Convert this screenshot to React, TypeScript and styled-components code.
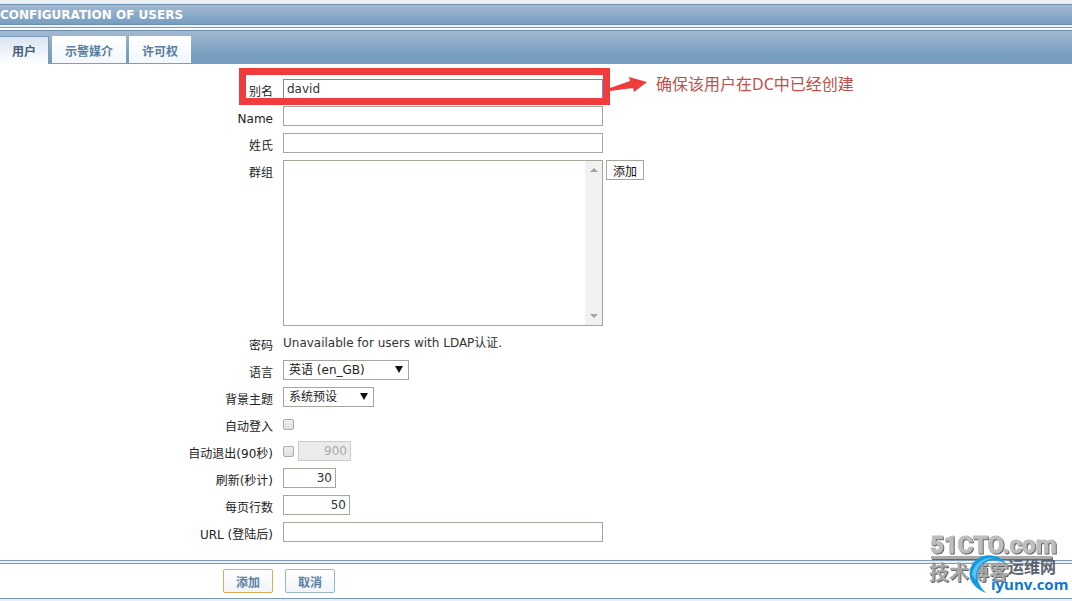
import React from 'react';
import styled, { createGlobalStyle } from 'styled-components';

const Global = createGlobalStyle`
  * { box-sizing: border-box; }
  body { margin: 0; background: #fff; color: #333; }
  body, input, button, select { font-family: "DejaVu Sans", "Noto Sans CJK SC", sans-serif; font-size: 12px; }
`;

const Page = styled.main`
  position: relative;
  border-top: 4px solid #e9eff4;
  border-bottom: 2px solid #e6f0f8;
  overflow: hidden;
`;
const Title = styled.h1`
  margin: 0;
  height: 21px;
  border-top: 1px solid #6f90ad;
  border-bottom: 1px solid #6f90ad;
  background: linear-gradient(#a2b9d2, #769dc0);
  color: #fff;
  font: bold 12px/20px "DejaVu Sans", sans-serif;
`;
const Gap = styled.div`
  height: 5px;
  border-top: 2px solid #eaf3fa;
  background: linear-gradient(#7f9bb3 1px, #fff 1px);
`;
const Tabs = styled.nav`
  display: flex;
  gap: 3px;
  height: 34px;
  padding-top: 5px;
  border-top: 1px solid #6f90ad;
  border-bottom: 1px solid #7b9fc0;
  background: linear-gradient(#a2b9d2, #769dc0 75%);
`;
const Tab = styled.button<{ $active?: boolean }>`
  height: ${p => (p.$active ? 28 : 27)}px;
  padding: 0 12px;
  border: 1px solid ${p => (p.$active ? '#7d9cbb' : '#fff')};
  border-width: 1px 1px 0 ${p => (p.$active ? 0 : 1)}px;
  background: ${p => (p.$active ? 'linear-gradient(#d9e5f1, #fff)' : 'linear-gradient(#fff, #f1f7fc)')};
  color: ${p => (p.$active ? '#44607c' : '#5a7fa3')};
  font-weight: bold;
`;
const Rows = styled.div`
  display: grid;
  gap: 7px;
  padding: 15px 0 18px;
`;
const Row = styled.div`
  display: grid;
  grid-template-columns: 273px 1fr;
  column-gap: 10px;
  align-items: start;
`;
const Label = styled.label`
  padding-top: 3px;
  height: 20px;
  color: #222;
  line-height: 20px;
  text-align: right;
`;
const Cell = styled.div`
  display: flex;
  align-items: flex-start;
  gap: 3px;
`;
const Input = styled.input<{ $w?: number; $focus?: boolean }>`
  width: ${p => p.$w ?? 320}px;
  height: 20px;
  padding: 0 3px;
  border: 1px solid ${p => (p.$focus ? '#6a8bd0' : '#a6a69c')};
  background: #fff;
  color: #333;
  outline: none;
  text-align: ${p => (p.$w ? 'right' : 'left')};
  &:disabled { background: #ebebeb; border-color: #ccc; color: #aaa; }
`;
const ListBox = styled.div`
  display: flex;
  justify-content: flex-end;
  width: 320px;
  height: 166px;
  border: 1px solid #a6a69c;
`;
const Track = styled.div`
  display: flex;
  flex-direction: column;
  justify-content: space-between;
  align-items: center;
  width: 17px;
  padding: 7px 0;
  background: #f1f1f1;
`;
const Arrow = styled.span<{ $down?: boolean }>`
  border: 4px solid transparent;
  border-width: ${p => (p.$down ? '4px 4px 0' : '0 4px 4px')};
  border-${p => (p.$down ? 'top' : 'bottom')}-color: #a3a3a3;
`;
const SmallButton = styled.button`
  width: 38px;
  height: 20px;
  padding: 0;
  border: 1px solid #a6a69c;
  background: #fff;
  color: #111;
`;
const SelectWrap = styled.span<{ $w: number }>`
  position: relative;
  width: ${p => p.$w}px;
  height: 20px;
  &::after {
    content: '';
    position: absolute;
    right: 6px;
    top: 6px;
    border: 4px solid transparent;
    border-width: 7px 4px 0;
    border-top-color: #111;
    pointer-events: none;
  }
`;
const Select = styled.select`
  appearance: none;
  width: 100%;
  height: 20px;
  padding: 0 5px;
  border: 1px solid #a6a69c;
  border-radius: 0;
  background: #fff;
  color: #222;
`;
const Check = styled.input`
  appearance: none;
  width: 11px;
  height: 11px;
  margin: 5px 1px 0 0;
  border: 1px solid #aaa;
  border-radius: 2px;
  background: linear-gradient(#f0f0f0, #dedede);
`;
const Text = styled.span`
  line-height: 20px;
`;
const Footer = styled.div`
  display: flex;
  gap: 12px;
  height: 36px;
  padding: 5px 0 0 223px;
  border-top: 1px solid #7f9bb3;
  border-bottom: 1px solid #7f9bb3;
`;
const Divider = styled.div`
  height: 3px;
  border-top: 1px solid #7f9bb3;
  background: #e6f0f8;
`;
const Action = styled.button<{ $main?: boolean }>`
  width: 50px;
  height: 24px;
  padding: 0;
  border: 1px solid ${p => (p.$main ? '#e0ab50' : '#9bb2cb')};
  border-radius: 2px;
  background: linear-gradient(#fff, #f0f5fa);
  color: #5a7fa3;
  font-weight: bold;
`;
const Callout = styled.div`
  position: absolute;
  left: 239px;
  top: 64px;
  display: flex;
  align-items: flex-start;
  pointer-events: none;
`;
const Frame = styled.div`
  width: 371px;
  height: 37px;
  border: 7px solid #f03c3c;
`;
const Note = styled.span`
  margin-left: 8px;
  color: #c0504d;
  font: 16px/32px "Noto Sans", "Noto Sans CJK SC", sans-serif;
`;
const Watermark = styled.svg`
  position: absolute;
  right: 0;
  bottom: -2px;
  pointer-events: none;
`;
const Embossed = styled.g`
  filter: drop-shadow(1px 1px 0 #666);
`;

export default function App() {
  return (
    <>
      <Global />
      <Page>
        <Title>CONFIGURATION OF USERS</Title>
        <Gap />
        <Tabs>
          <Tab $active>用户</Tab>
          <Tab>示警媒介</Tab>
          <Tab>许可权</Tab>
        </Tabs>
        <form onSubmit={e => e.preventDefault()}>
          <Rows>
            <Row><Label htmlFor="alias">别名</Label><Cell><Input id="alias" $focus defaultValue="david" /></Cell></Row>
            <Row><Label htmlFor="name">Name</Label><Cell><Input id="name" /></Cell></Row>
            <Row><Label htmlFor="surname">姓氏</Label><Cell><Input id="surname" /></Cell></Row>
            <Row>
              <Label as="span">群组</Label>
              <Cell>
                <ListBox><Track><Arrow /><Arrow $down /></Track></ListBox>
                <SmallButton type="button">添加</SmallButton>
              </Cell>
            </Row>
            <Row><Label as="span">密码</Label><Cell><Text>Unavailable for users with LDAP认证.</Text></Cell></Row>
            <Row><Label htmlFor="lang">语言</Label><Cell><SelectWrap $w={126}><Select id="lang"><option>英语 (en_GB)</option></Select></SelectWrap></Cell></Row>
            <Row><Label htmlFor="theme">背景主题</Label><Cell><SelectWrap $w={91}><Select id="theme"><option>系统预设</option></Select></SelectWrap></Cell></Row>
            <Row><Label htmlFor="login">自动登入</Label><Cell><Check type="checkbox" id="login" /></Cell></Row>
            <Row><Label htmlFor="logout">自动退出(90秒)</Label><Cell><Check type="checkbox" id="logout" /><Input aria-label="秒" $w={53} disabled defaultValue="900" /></Cell></Row>
            <Row><Label htmlFor="refresh">刷新(秒计)</Label><Cell><Input id="refresh" $w={53} defaultValue="30" /></Cell></Row>
            <Row><Label htmlFor="rows">每页行数</Label><Cell><Input id="rows" $w={67} defaultValue="50" /></Cell></Row>
            <Row><Label htmlFor="url">URL (登陆后)</Label><Cell><Input id="url" /></Cell></Row>
          </Rows>
          <Divider />
          <Footer>
            <Action $main type="submit">添加</Action>
            <Action type="button">取消</Action>
          </Footer>
        </form>
        <Callout>
          <Frame />
          <svg width="38" height="34" viewBox="0 0 38 34"><path d="M0 20L20 13L19 9L37 14L24 24L23 20L0 23Z" fill="#f03c3c" /></svg>
          <Note>确保该用户在DC中已经创建</Note>
        </Callout>
        <Watermark width="147" height="76" viewBox="0 0 147 76">
          <Embossed>
            <text x="5" y="28" fontSize="24" fontWeight="bold" fontFamily="Roboto" fill="#bdbdbd" stroke="#bdbdbd">51CTO.com</text>
            <path d="M6 31H127V34H6Z" fill="#aaa" />
            <text x="4" y="55" fontSize="20" fontWeight="bold" fontFamily="Noto Sans CJK SC" fill="#a8a8a8">技术博客</text>
          </Embossed>
          <path d="M81 39C75 30 61 27 51 35C40 45 43 61 61 68C52 59 50 50 55 42C61 34 72 33 81 39Z" fill="#149be0" />
          <path d="M47 50C48 39 59 31 70 33C58 34 50 42 51 55Z" fill="#5cc4f2" />
          <text x="83" y="48" fontSize="16" fontFamily="Noto Sans CJK SC" fontWeight="bold" fill="#5b6370">运维网</text>
          <text x="66" y="65" fontSize="15" fontWeight="bold" fontFamily="Open Sans" fill="#0f78cc">iyunv.com</text>
        </Watermark>
      </Page>
    </>
  );
}
